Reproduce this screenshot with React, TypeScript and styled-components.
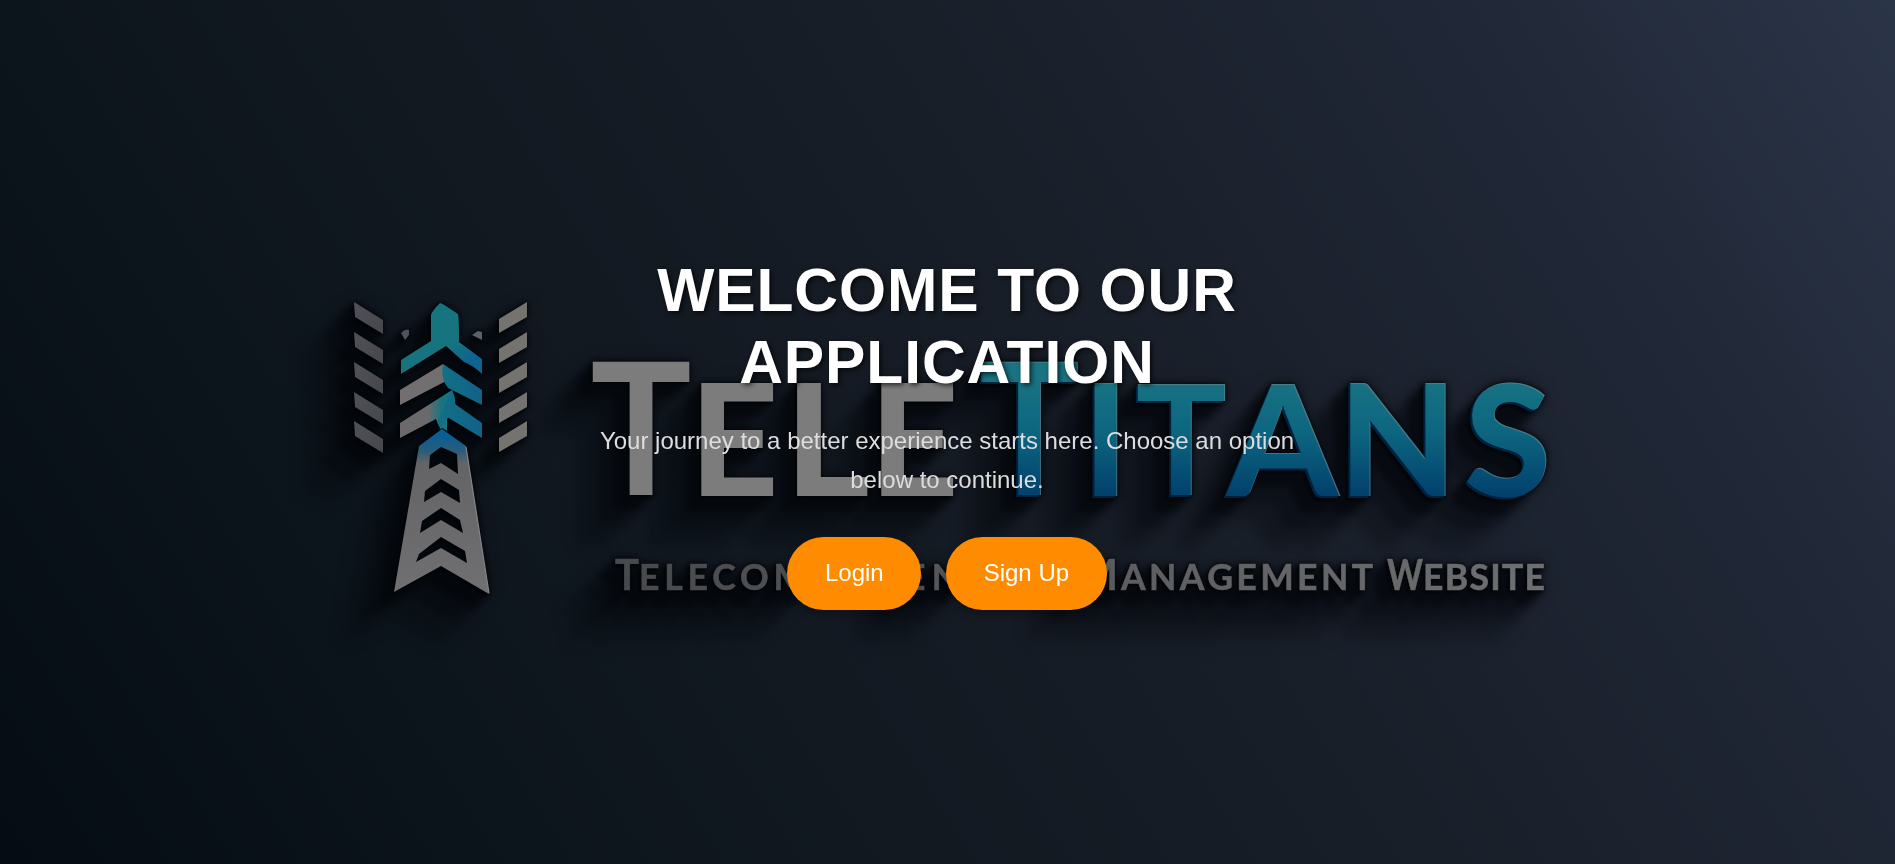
import React from 'react';
import styled, { createGlobalStyle } from 'styled-components';

const GlobalStyle = createGlobalStyle`
  * { box-sizing: border-box; }
  body {
    margin: 0;
    font-family: "Liberation Sans", Arial, sans-serif;
    overflow: hidden;
  }
`;

const Hero = styled.main`
  position: relative;
  display: flex;
  align-items: center;
  justify-content: center;
  height: 100vh;
  overflow: hidden;
  background: linear-gradient(
    58deg,
    #050c13 0%,
    #0d151c 22%,
    #161c25 50%,
    #1b212c 65%,
    #1f2635 80%,
    #2b3548 100%
  );
`;

const Backdrop = styled.svg`
  position: absolute;
  inset: 0;
  width: 100%;
  height: 100%;
`;

const Content = styled.section`
  position: relative;
  display: flex;
  flex-direction: column;
  align-items: center;
  width: 720px;
  margin-right: 1px;
  text-align: center;
`;

const Title = styled.h1`
  margin: 0 0 24px;
  font-size: 60.5px;
  line-height: 72px;
  letter-spacing: 0.9px;
  text-transform: uppercase;
  color: #fff;
  text-shadow: 2px 2px 5px rgba(0, 0, 0, 0.7);
`;

const Lead = styled.p`
  margin: 0 0 38px;
  font-size: 24px;
  line-height: 38.4px;
  color: #ddd;
`;

const Actions = styled.div`
  display: flex;
  gap: 25px;
`;

const Action = styled.button`
  height: 73px;
  padding: 0 37.5px;
  border: 0;
  border-radius: 37px;
  background: #ff8c00;
  color: #fff;
  font: 24px "Liberation Sans", Arial, sans-serif;
  box-shadow: 0 4px 10px rgba(0, 0, 0, 0.3);
`;

type Glyph = { c: string; x: number; size: number; sx?: number; weight?: number };

const silverLetters: Glyph[] = [
  { c: 'T', x: 641, size: 184, sx: 0.92 },
  { c: 'E', x: 734, size: 153, weight: 2 },
  { c: 'L', x: 827, size: 153, sx: 1.05, weight: 2 },
  { c: 'E', x: 914, size: 153, weight: 2 },
];

const tealLetters: Glyph[] = [
  { c: 'T', x: 1029.5, size: 184, sx: 0.92 },
  { c: 'I', x: 1106, size: 153, weight: 2 },
  { c: 'T', x: 1181.5, size: 153 },
  { c: 'A', x: 1283, size: 153, sx: 1.05, weight: 1 },
  { c: 'N', x: 1398, size: 153, weight: 2 },
  { c: 'S', x: 1508, size: 152, sx: 1.02, weight: 3 },
];

const Letters = ({ glyphs, paint }: { glyphs: Glyph[]; paint: string }) => (
  <>
    {glyphs.map((g, i) => (
      <text
        key={i}
        fontSize={g.size}
        fill={paint}
        stroke={paint}
        strokeWidth={g.weight ?? 0}
        transform={`translate(${g.x} 494.5) scale(${g.sx ?? 1} 1)`}
      >
        {g.c}
      </text>
    ))}
  </>
);

const Wordmark = () => (
  <g fontFamily="Lato" fontWeight={700} textAnchor="middle">
    <Letters glyphs={silverLetters} paint="#7c7c7c" />
    <g filter="url(#rim)"><Letters glyphs={tealLetters} paint="url(#teal)" /></g>
  </g>
);

const Tagline = () => (
  <g fontFamily="Lato" fontWeight={700} fontSize={35.5} fill="url(#tag)" stroke="url(#tag)" strokeWidth={0.6}>
    <text x={615} y={589.5} fontSize={42} textLength={24} lengthAdjust="spacingAndGlyphs">T</text>
    <text x={639} y={589.5} textLength={168}>ELECOM</text>
    <text x={905} y={589.5} textLength={54}>EN</text>
    <text x={1078} y={589.5} fontSize={42} textLength={40} lengthAdjust="spacingAndGlyphs">M</text>
    <text x={1121} y={589.5} textLength={252}>ANAGEMENT</text>
    <text x={1387} y={589.5} fontSize={42} textLength={36} lengthAdjust="spacingAndGlyphs">W</text>
    <text x={1423} y={589.5} textLength={122}>EBSITE</text>
  </g>
);

const barTops = [302, 332, 362, 392, 421];

const Tower = () => (
  <g>
    {barTops.map((y) => (
      <g key={y}>
        <path d={`M354 ${y}l29 18v14l-28-17z`} fill="url(#barDark)" />
        <path d={`M527 ${y}l-28 17v14l28-16z`} fill="#74736f" />
      </g>
    ))}
    <path d="M401 333q4-5 8-3v5l-4 5z" fill="#4c545e" />
    <path d="M472 335l6-4 4 1v8z" fill="#59616c" />
    <path d="M440 303q2 0 18 11q1 3 1 28l23 17v15q-8-8-18-12l-18-16-45 28v-14l30-19v-26q1-4 9-12z" fill="url(#crown)" />
    <path d="M443 364l5 16-48 25v-15z" fill="#736f70" />
    <path d="M443 364l39 26v15l-34-17q-8-10-5-24z" fill="url(#lower)" />
    <path d="M452 390l4 17-9 12v12l-8-5-3-7-36 19v-15z" fill="url(#mixed)" />
    <path d="M452 390q4 8 3 14l27 19v15l-35-21-6 13-4-8z" fill="url(#lower)" />
    <path
      fillRule="evenodd"
      d="M442 429l24 17 23 148-48-28-47 26 25-146zM441 447l-11 8-1 14 12-6 17 11-1-20zM441 479l-16 12-1 11 17-10 19 11-1-13zM441 508l-19 13-2 12 21-13 22 13-3-13zM441 537l-22 17-3 8 25-14 26 15-2-12z"
      fill="url(#mast)"
    />
    <path d="M466 447l23 146" stroke="#85878a" strokeWidth="1.2" />
  </g>
);

const SceneDefs = () => (
  <defs>
    <linearGradient id="teal" gradientUnits="userSpaceOnUse" x1="0" y1="-115" x2="0" y2="0">
      <stop offset="0" stopColor="#187382" />
      <stop offset="0.45" stopColor="#0d6680" />
      <stop offset="1" stopColor="#02416d" />
    </linearGradient>
    <linearGradient id="barDark" x1="0" y1="0" x2="1" y2="1">
      <stop offset="0" stopColor="#505156" />
      <stop offset="1" stopColor="#45474c" />
    </linearGradient>
    <linearGradient id="crown" x1="0" y1="0" x2="1" y2="1">
      <stop offset="0.6" stopColor="#16747f" />
      <stop offset="0.85" stopColor="#0d6391" />
    </linearGradient>
    <linearGradient id="lower" x1="0" y1="0" x2="1" y2="0">
      <stop offset="0.1" stopColor="#116f86" />
      <stop offset="1" stopColor="#126189" />
    </linearGradient>
    <linearGradient id="mixed" x1="0" y1="0" x2="1" y2="0">
      <stop offset="0.5" stopColor="#6b696c" />
      <stop offset="0.75" stopColor="#16757f" />
    </linearGradient>
    <linearGradient id="mast" gradientUnits="userSpaceOnUse" x1="442" y1="430" x2="442" y2="594">
      <stop offset="0.04" stopColor="#0b5e92" />
      <stop offset="0.13" stopColor="#2b5c78" />
      <stop offset="0.2" stopColor="#646466" />
      <stop offset="1" stopColor="#707072" />
    </linearGradient>
    <linearGradient id="tag" gradientUnits="userSpaceOnUse" x1="615" y1="0" x2="1545" y2="0">
      <stop offset="0" stopColor="#47494d" />
      <stop offset="1" stopColor="#6e6f71" />
    </linearGradient>
    <filter id="rim" x="-5%" y="-10%" width="110%" height="120%" colorInterpolationFilters="sRGB">
      <feOffset in="SourceAlpha" dx="-1.2" dy="0.6" result="moved" />
      <feFlood floodColor="#6c8288" floodOpacity="0.6" />
      <feComposite in2="SourceAlpha" operator="in" result="tint" />
      <feComposite in="tint" in2="moved" operator="out" result="edge" />
      <feOffset in="SourceAlpha" dx="-2.5" dy="1.5" result="sideShape" />
      <feFlood floodColor="#01223f" />
      <feComposite in2="sideShape" operator="in" result="side" />
      <feMerge>
        <feMergeNode in="side" />
        <feMergeNode in="SourceGraphic" />
        <feMergeNode in="edge" />
      </feMerge>
    </filter>
    {/* Extruded shadow falling to the lower left: each step doubles its length. */}
    <filter id="cast" filterUnits="userSpaceOnUse" x="200" y="220" width="1500" height="520" colorInterpolationFilters="sRGB">
      <feOffset in="SourceAlpha" dx="-1" dy="1" result="a0" />
      <feMerge result="s2"><feMergeNode in="SourceAlpha" /><feMergeNode in="a0" /></feMerge>
      <feOffset in="s2" dx="-2" dy="2" result="a1" />
      <feMerge result="s4"><feMergeNode in="s2" /><feMergeNode in="a1" /></feMerge>
      <feOffset in="s4" dx="-4" dy="4" result="a2" />
      <feMerge result="s8"><feMergeNode in="s4" /><feMergeNode in="a2" /></feMerge>
      <feOffset in="s8" dx="-8" dy="8" result="a3" />
      <feMerge result="s16"><feMergeNode in="s8" /><feMergeNode in="a3" /></feMerge>
      <feOffset in="s16" dx="-16" dy="16" result="a4" />
      <feMerge result="s32"><feMergeNode in="s16" /><feMergeNode in="a4" /></feMerge>
      <feOffset in="s32" dx="-20" dy="20" result="a5" />
      <feMerge result="s52"><feMergeNode in="s32" /><feMergeNode in="a5" /></feMerge>
      <feGaussianBlur in="s52" stdDeviation="8" result="b52" />
      <feColorMatrix in="b52" values="0 0 0 0 0  0 0 0 0 0.01  0 0 0 0 0.03  0 0 0 0.3 0" result="far" />
      <feGaussianBlur in="s32" stdDeviation="5" result="b32" />
      <feColorMatrix in="b32" values="0 0 0 0 0  0 0 0 0 0.01  0 0 0 0 0.03  0 0 0 0.3 0" result="mid" />
      <feGaussianBlur in="s16" stdDeviation="3.5" result="b16" />
      <feColorMatrix in="b16" values="0 0 0 0 0  0 0 0 0 0.01  0 0 0 0 0.02  0 0 0 0.5 0" result="near" />
      <feGaussianBlur in="s4" stdDeviation="1.5" result="b4" />
      <feColorMatrix in="b4" values="0 0 0 0 0  0 0 0 0 0.01  0 0 0 0 0.02  0 0 0 0.7 0" result="touch" />
      <feMerge>
        <feMergeNode in="far" />
        <feMergeNode in="mid" />
        <feMergeNode in="near" />
        <feMergeNode in="touch" />
        <feMergeNode in="SourceGraphic" />
      </feMerge>
    </filter>
  </defs>
);

const App = () => (
  <>
    <GlobalStyle />
    <Hero>
      <Backdrop viewBox="0 0 1895 864" preserveAspectRatio="xMidYMid slice" aria-hidden="true">
        <SceneDefs />
        <g filter="url(#cast)">
          <Tower />
          <Wordmark />
          <Tagline />
        </g>
      </Backdrop>
      <Content>
        <Title>Welcome to Our Application</Title>
        <Lead>Your journey to a better experience starts here. Choose an option below to continue.</Lead>
        <Actions>
          <Action>Login</Action>
          <Action>Sign Up</Action>
        </Actions>
      </Content>
    </Hero>
  </>
);

export default App;
